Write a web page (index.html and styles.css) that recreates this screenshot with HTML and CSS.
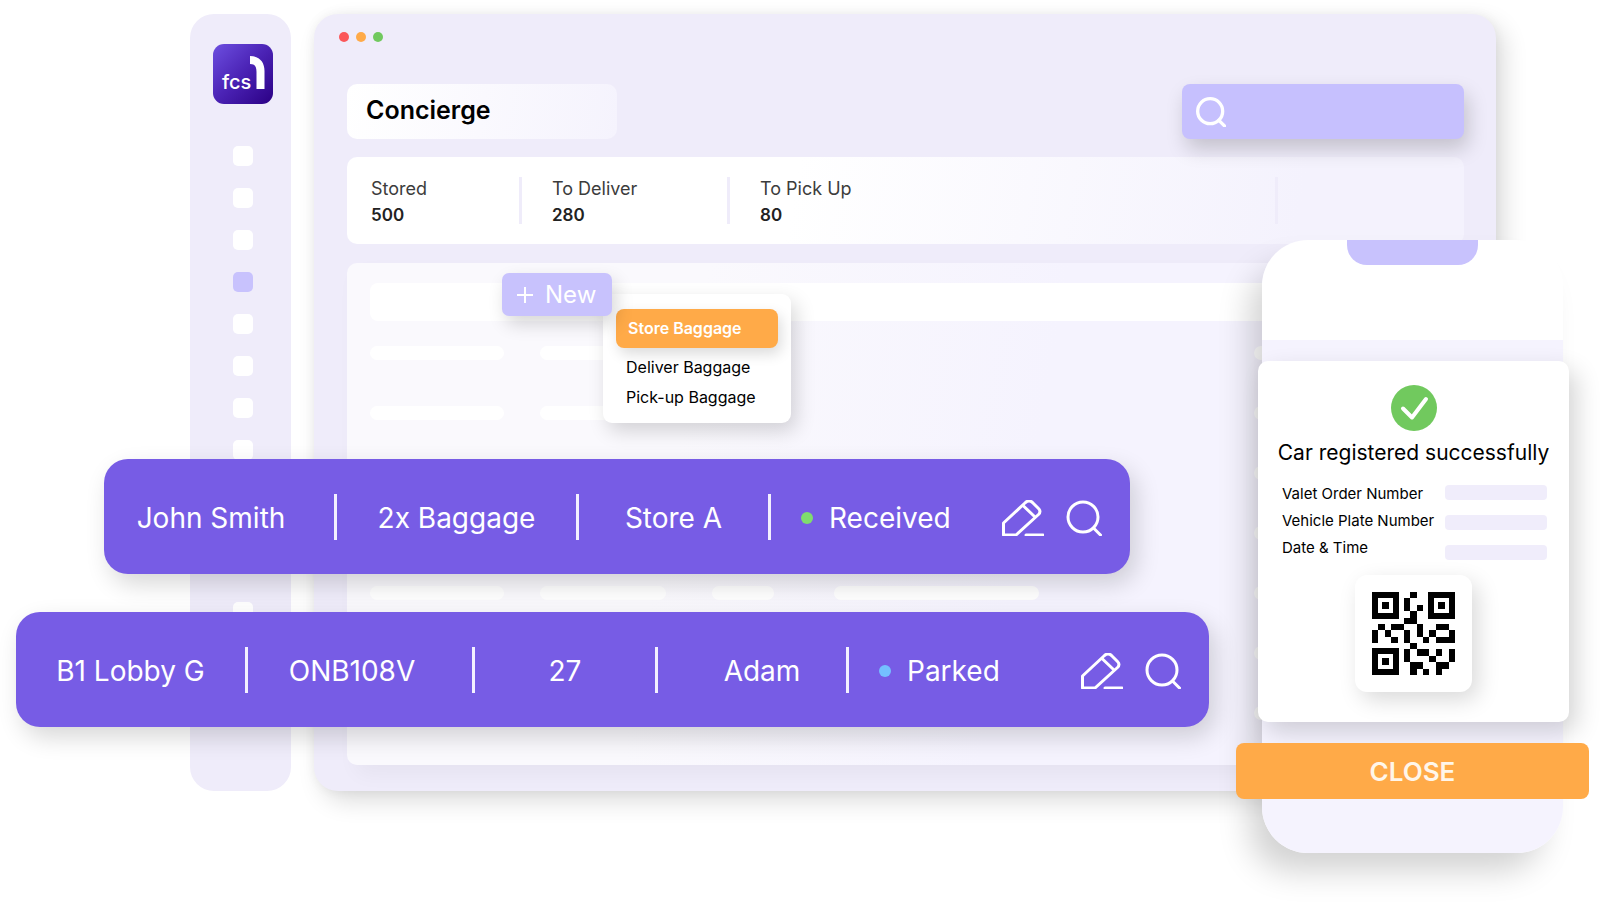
FILE: index.html
```html
<!DOCTYPE html>
<html lang="en">
<head>
    <meta charset="UTF-8">
    <meta name="viewport" content="width=device-width, initial-scale=1.0">
    <title>FCS1 - Concierge</title>
    <link rel="stylesheet" href="styles.css">
</head>
<body>
    <!-- shared icons -->
    <svg class="sprite" aria-hidden="true">
        <symbol id="icon-search" viewBox="0 0 36 36">
            <circle cx="17" cy="17" r="15"></circle>
            <path d="M27.500 28L34.500 35"></path>
        </symbol>
        <symbol id="icon-edit" viewBox="0 0 42 36">
            <path d="M1.500 35V23L23.500 2.500Q27 -.5 30.500 2.500L36.500 8.500Q39.500 11.500 36.500 14.500L14 35Z"></path>
            <path d="M21.500 6L32.500 16.500M24 35H41"></path>
        </symbol>
    </svg>

    <div class="stage">
        <nav class="sidebar">
            <div class="logo">
                <svg viewBox="0 0 60 60" role="img" aria-label="fcs1">
                    <text x="9" y="45">fcs</text>
                    <path d="M37 12C46 12 51.500 17.500 51.500 27V45H43.500V28C43.500 22 41.500 20 37 20Z"></path>
                </svg>
            </div>
            <ul class="menu">
                <li></li>
                <li></li>
                <li></li>
                <li class="active"></li>
                <li></li>
                <li></li>
                <li></li>
                <li></li>
                <li></li>
            </ul>
            <ul class="menu menu-bottom">
                <li></li>
                <li></li>
            </ul>
        </nav>

        <main class="window">
            <div class="dots">
                <span class="dot red"></span>
                <span class="dot orange"></span>
                <span class="dot green"></span>
            </div>

            <div class="header">
                <h1>Concierge</h1>
                <div class="search">
                    <svg class="icon"><use href="#icon-search"></use></svg>
                    <input type="search" aria-label="Search">
                </div>
            </div>

            <div class="stats">
                <div class="stat">
                    <span>Stored</span>
                    <strong>500</strong>
                </div>
                <div class="stat">
                    <span>To Deliver</span>
                    <strong>280</strong>
                </div>
                <div class="stat">
                    <span>To Pick Up</span>
                    <strong>80</strong>
                </div>
                <div class="stat"></div>
            </div>

            <div class="panel">
                <div class="panel-head"></div>
                <div class="lines">
                    <div class="line"><i></i><i></i><i class="last"></i></div>
                    <div class="line"><i></i><i></i><i class="last"></i></div>
                    <div class="line"><i></i><i></i><i></i><i></i><i class="last"></i></div>
                    <div class="line"><i></i><i></i><i></i><i></i><i class="last"></i></div>
                    <div class="line"><i></i><i></i><i></i><i></i><i class="last"></i></div>
                    <div class="line"><i></i><i></i><i></i><i></i><i class="last"></i></div>
                    <div class="line"><i></i><i></i><i></i><i></i><i class="last"></i></div>
                </div>

                <div class="dropdown">
                    <button class="new-btn" type="button">
                        <svg class="plus" viewBox="0 0 16 16"><path d="M8 0V16M0 8H16"></path></svg>
                        New
                    </button>
                    <div class="dropdown-menu">
                        <button class="selected" type="button">Store Baggage</button>
                        <button type="button">Deliver Baggage</button>
                        <button type="button">Pick-up Baggage</button>
                    </div>
                </div>
            </div>
        </main>

        <div class="row baggage-row">
            <div class="cell">John Smith</div>
            <div class="cell">2x Baggage</div>
            <div class="cell">Store A</div>
            <div class="cell status">
                <span class="state received"></span>Received
                <div class="actions">
                    <button type="button" aria-label="Edit"><svg class="icon edit"><use href="#icon-edit"></use></svg></button>
                    <button type="button" aria-label="View"><svg class="icon"><use href="#icon-search"></use></svg></button>
                </div>
            </div>
        </div>

        <div class="row valet-row">
            <div class="cell">B1 Lobby G</div>
            <div class="cell plate">ONB108V</div>
            <div class="cell">27</div>
            <div class="cell valet">Adam</div>
            <div class="cell status">
                <span class="state parked"></span>Parked
                <div class="actions">
                    <button type="button" aria-label="Edit"><svg class="icon edit"><use href="#icon-edit"></use></svg></button>
                    <button type="button" aria-label="View"><svg class="icon"><use href="#icon-search"></use></svg></button>
                </div>
            </div>
        </div>

        <section class="phone">
            <div class="notch"></div>
            <div class="card">
                <svg class="check" viewBox="0 0 46 46">
                    <circle cx="23" cy="23" r="23"></circle>
                    <path d="M12 23.500L21 32.500L35 14"></path>
                </svg>
                <h2>Car registered successfully</h2>
                <div class="details">
                    <div class="labels">
                        <span>Valet Order Number</span>
                        <span>Vehicle Plate Number</span>
                        <span>Date &amp; Time</span>
                    </div>
                    <div class="values"><i></i><i></i><i></i></div>
                </div>
                <div class="qr">
                    <svg viewBox="0 0 13 13" role="img" aria-label="QR code">
                        <g fill-rule="evenodd">
                            <path d="M0 0h4.300v4.300h-4.300zM.95 .95v2.400h2.400v-2.400zM1.600 1.600h1.100v1.100h-1.100z"></path>
                            <path d="M8.700 0h4.300v4.300h-4.300zM9.650 .95v2.400h2.400v-2.400zM10.300 1.600h1.100v1.100h-1.100z"></path>
                            <path d="M0 8.700h4.300v4.300h-4.300zM.95 9.650v2.400h2.400v-2.400zM1.600 10.300h1.100v1.100h-1.100z"></path>
                        </g>
                        <path d="M6 0h1v1h-1zM5 1h1v2h-1zM7 2h1v1h-1zM6 3h1v1h-1zM5 4h2v1h-2z"></path>
                        <path d="M1 5h1v1h-1zM3 5h2v1h-2zM7 5h1v2h-1zM10 5h2v1h-2z"></path>
                        <path d="M0 6h1v2h-1zM2 6h1v1h-1zM5 6h1v2h-1zM9 6h1v1h-1zM12 6h1v1h-1z"></path>
                        <path d="M3 7h1v1h-1zM8 7h1v1h-1zM10 7h3v1h-3zM6 8h1v1h-1z"></path>
                        <path d="M5 9h1v2h-1zM7 9h2v1h-2zM10 9h1v1h-1zM12 9h1v2h-1zM9 10h1v1h-1z"></path>
                        <path d="M6 11h2v1h-2zM10 11h2v1h-2zM6 12h1v1h-1zM8 12h1v1h-1zM10 12h1v1h-1z"></path>
                    </svg>
                </div>
            </div>
            <button class="close-btn" type="button">CLOSE</button>
        </section>
    </div>
</body>
</html>
```

FILE: styles.css
```css
* {
    box-sizing: border-box;
}
body {
    margin: 0;
    font-family: "Inter", sans-serif;
    background: #fff;
    color: #000;
}
button {
    font-family: inherit;
    border: none;
    background: none;
    padding: 0;
    cursor: pointer;
}
ul {
    list-style: none;
    margin: 0;
    padding: 0;
}
.sprite {
    display: none;
}
.icon {
    display: block;
    width: 36px;
    height: 36px;
    fill: none;
    stroke: #fff;
    stroke-width: 3;
    stroke-linecap: round;
    stroke-linejoin: round;
    overflow: visible;
}
.stage {
    position: relative;
    display: flex;
    gap: 23px;
    padding: 14px 104px 114px 190px;
    overflow: hidden;
}

/* sidebar */
.sidebar {
    width: 101px;
    flex-shrink: 0;
    display: flex;
    flex-direction: column;
    align-items: center;
    padding: 30px 0 0 4px;
    background: #efecfa;
    border-radius: 24px;
}
.logo {
    width: 60px;
    height: 60px;
    border-radius: 11px;
    background: linear-gradient(135deg, #6d4fe0, #4a22b4 50%, #2b0084);
}
.logo svg {
    display: block;
    fill: #fff;
    font-size: 20px;
    font-weight: 500;
}
.menu {
    display: flex;
    flex-direction: column;
    gap: 22px;
    margin-top: 42px;
}
.menu li {
    width: 20px;
    height: 20px;
    border-radius: 5px;
    background: #fff;
}
.menu .active {
    background: #c8c2fd;
}
.menu-bottom {
    margin-top: 100px;
}

/* main window */
.window {
    flex: 1;
    padding: 18px 32px 26px 33px;
    background: #efecfa;
    border-radius: 24px;
    box-shadow: 8px 10px 24px rgba(0, 0, 0, 0.14), 0 0 12px rgba(0, 0, 0, 0.05);
}
.dots {
    display: flex;
    gap: 7px;
    margin-left: -8px;
}
.dot {
    width: 10px;
    height: 10px;
    border-radius: 50%;
}
.red {
    background: #fb5759;
}
.orange {
    background: #ffaa48;
}
.green {
    background: #71c95e;
}
.header {
    display: flex;
    justify-content: space-between;
    margin-top: 42px;
}
h1 {
    width: 270px;
    margin: 0;
    padding-left: 19px;
    font-size: 25px;
    font-weight: 600;
    line-height: 52px;
    border-radius: 10px;
    background: linear-gradient(100deg, #fff, #f5f3fd);
}
.search {
    display: flex;
    align-items: center;
    width: 282px;
    height: 55px;
    padding: 0 14px;
    border-radius: 8px;
    background: #c6c0fe;
    box-shadow: 4px 10px 20px rgba(0, 0, 0, 0.18);
}
.search .icon {
    width: 30px;
    height: 30px;
    stroke-width: 4;
    flex-shrink: 0;
}
.search input {
    width: 100%;
    height: 100%;
    border: none;
    outline: none;
    background: none;
    font-size: 18px;
    color: #fff;
}
.stats {
    display: grid;
    grid-template-columns: 172fr 208fr 548fr 189fr;
    margin-top: 18px;
    padding: 20px 0;
    border-radius: 10px;
    background: linear-gradient(100deg, #fff 40%, #f4f2fd 85%);
}
.stat {
    display: flex;
    flex-direction: column;
    height: 47px;
    padding-left: 30px;
    border-left: 3px solid #efecfa;
}
.stat:first-child {
    padding-left: 24px;
    border-left: none;
}
.stat span {
    font-size: 18px;
    line-height: 24px;
    color: #3c3c3c;
}
.stat strong {
    font-size: 17px;
    font-weight: 600;
    line-height: 28px;
    color: #222;
}
.panel {
    position: relative;
    margin-top: 19px;
    padding: 20px 0 45px 23px;
    border-radius: 10px;
    background: linear-gradient(100deg, #faf9fd 30%, #f5f3fe 60%);
    box-shadow: 8px 10px 20px rgba(0, 0, 0, 0.04);
}
.panel-head {
    height: 38px;
    margin-bottom: 25px;
    border-radius: 8px 0 0 8px;
    background: #fff;
}
.lines {
    display: flex;
    flex-direction: column;
    gap: 46px;
}
.line {
    display: flex;
    height: 14px;
}
.line i {
    width: 134px;
    border-radius: 7px;
    background: #fff;
}
.line i:nth-child(2) {
    width: 126px;
    margin-left: 36px;
}
.line i:nth-child(3) {
    width: 62px;
    margin-left: 46px;
}
.line i:nth-child(4) {
    width: 205px;
    margin-left: 60px;
}
.line i.last {
    width: 190px;
    margin-left: auto;
    margin-right: 20px;
}

/* new baggage menu, floats over the list */
.dropdown {
    position: absolute;
    top: 10px;
    left: 155px;
}
.new-btn {
    position: relative;
    z-index: 1;
    display: flex;
    align-items: center;
    gap: 12px;
    height: 43px;
    padding: 0 16px 0 15px;
    border-radius: 7px;
    background: #c8c2fd;
    color: #fff;
    font-size: 24px;
    box-shadow: 4px 8px 18px rgba(0, 0, 0, 0.16);
}
.plus {
    width: 16px;
    height: 16px;
    stroke: #fff;
    stroke-width: 2;
}
.dropdown-menu {
    position: absolute;
    top: 21px;
    left: 101px;
    width: 188px;
    padding: 15px 13px 11px;
    border-radius: 9px;
    background: #fff;
    box-shadow: 5px 8px 20px rgba(0, 0, 0, 0.16);
}
.dropdown-menu button {
    display: block;
    width: 100%;
    padding-left: 10px;
    font-size: 16px;
    line-height: 30px;
    text-align: left;
}
.dropdown-menu .selected {
    margin-bottom: 4px;
    padding-left: 12px;
    line-height: 39px;
    border-radius: 8px;
    background: #ffaa48;
    color: #fff;
    font-weight: 600;
    box-shadow: 3px 6px 14px rgba(0, 0, 0, 0.14);
}

/* highlighted rows */
.row {
    position: absolute;
    display: grid;
    align-items: center;
    height: 115px;
    border-radius: 24px;
    background: #775ce5;
    color: #fff;
    font-size: 28px;
    white-space: nowrap;
    box-shadow: 6px 10px 24px rgba(0, 0, 0, 0.16);
}
.baggage-row {
    top: 459px;
    left: 104px;
    right: 470px;
    grid-template-columns: 230fr 242fr 192fr 362fr;
}
.valet-row {
    top: 612px;
    left: 16px;
    right: 391px;
    grid-template-columns: 229fr 227fr 183fr 191fr 363fr;
}
.cell {
    display: flex;
    align-items: center;
    justify-content: center;
    height: 46px;
    padding-top: 2px;
}
.cell + .cell {
    border-left: 3px solid #f3f0ff;
}
.baggage-row .cell:first-child,
.cell.plate {
    padding-right: 16px;
}
.cell.valet {
    padding-left: 20px;
}
.cell.status {
    justify-content: flex-start;
    padding: 2px 28px 0 30px;
}
.state {
    width: 12px;
    height: 12px;
    margin-right: 16px;
    border-radius: 50%;
}
.received {
    background: #7fdc6e;
}
.parked {
    background: #74c0ff;
}
.actions {
    display: flex;
    gap: 22px;
    margin-left: auto;
}
.edit {
    width: 42px;
}

/* phone */
.phone {
    position: absolute;
    top: 240px;
    right: 37px;
    width: 301px;
    padding-bottom: 54px;
    border-radius: 46px;
    background: linear-gradient(#fff 100px, #f5f3fe 100px);
    box-shadow: -16px 22px 32px -4px rgba(0, 0, 0, 0.18);
}
.notch {
    width: 131px;
    height: 25px;
    margin: 0 auto 96px;
    border-radius: 0 0 20px 20px;
    background: #c8c2fd;
}
.card {
    display: flex;
    flex-direction: column;
    align-items: center;
    margin: 0 -6px 21px -4px;
    padding: 24px 22px 30px;
    border-radius: 10px;
    background: #fff;
    box-shadow: 8px 10px 24px rgba(0, 0, 0, 0.16);
}
.check {
    width: 46px;
    height: 46px;
    fill: #71c95e;
}
.check path {
    fill: none;
    stroke: #fff;
    stroke-width: 4;
    stroke-linecap: round;
    stroke-linejoin: round;
}
h2 {
    margin: 7px 0 12px;
    font-size: 21px;
    font-weight: 400;
    line-height: 30px;
    white-space: nowrap;
}
.details {
    display: flex;
    justify-content: space-between;
    width: 100%;
}
.labels {
    padding-left: 2px;
    font-size: 15px;
    line-height: 27px;
    white-space: nowrap;
}
.labels span {
    display: block;
}
.values {
    display: flex;
    flex-direction: column;
    gap: 15px;
    width: 102px;
    padding-top: 5px;
}
.values i {
    height: 15px;
    border-radius: 4px;
    background: #f0edfb;
}
.qr {
    width: 117px;
    height: 117px;
    margin-top: 14px;
    padding: 17px;
    border-radius: 12px;
    background: #fff;
    box-shadow: 6px 8px 22px rgba(0, 0, 0, 0.15);
}
.qr svg {
    display: block;
    shape-rendering: crispEdges;
}
.close-btn {
    display: block;
    width: calc(100% + 52px);
    height: 56px;
    margin: 0 -26px;
    border-radius: 8px;
    background: #ffaa48;
    color: #fff6ea;
    font-size: 26px;
    font-weight: 600;
}
```
